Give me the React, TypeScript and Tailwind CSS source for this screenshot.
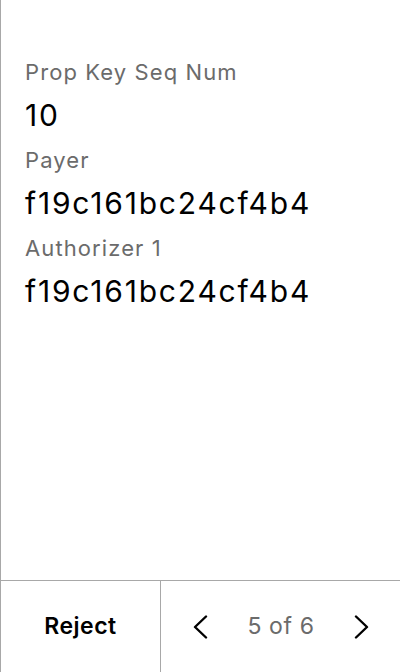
const fields = [
  { label: "Prop Key Seq Num", value: "10" },
  { label: "Payer", value: "f19c161bc24cf4b4" },
  { label: "Authorizer 1", value: "f19c161bc24cf4b4" },
]

function Chevron({ dir }: { dir: "left" | "right" }) {
  return (
    <svg width="16" height="24" viewBox="0 0 16 24" fill="none" stroke="currentColor" strokeWidth={2.4} strokeLinecap="round" strokeLinejoin="round">
      {dir === "left" ? <path d="M14 1.5 3 12l11 10.5" /> : <path d="M2 1.5 13 12 2 22.5" />}
    </svg>
  )
}

export default function App() {
  return (
    <div className="flex h-[672px] w-[400px] flex-col border-l border-[#a8a8a8] bg-white font-['Inter',sans-serif] text-black">
      <div className="flex-1 px-6 pt-[57px]">
        {fields.map((f) => (
          <div key={f.label} className="mb-[10px]">
            <div className="text-[22px] leading-[30px] tracking-[1.1px] text-[#6b6b6b]">{f.label}</div>
            <div className="mt-[8px] text-[30px] leading-[40px] tracking-[1.8px]">{f.value}</div>
          </div>
        ))}
      </div>
      <div className="flex h-[92px] border-t border-[#a8a8a8]">
        <button className="flex w-[160px] items-center justify-center border-r border-[#a8a8a8] text-[23px] font-semibold tracking-[0.5px]">
          Reject
        </button>
        <div className="flex flex-1 items-center justify-between pl-[31px] pr-[30px]">
          <Chevron dir="left" />
          <span className="text-[23px] tracking-[0.6px] text-[#6b6b6b]">5 of 6</span>
          <Chevron dir="right" />
        </div>
      </div>
    </div>
  )
}
